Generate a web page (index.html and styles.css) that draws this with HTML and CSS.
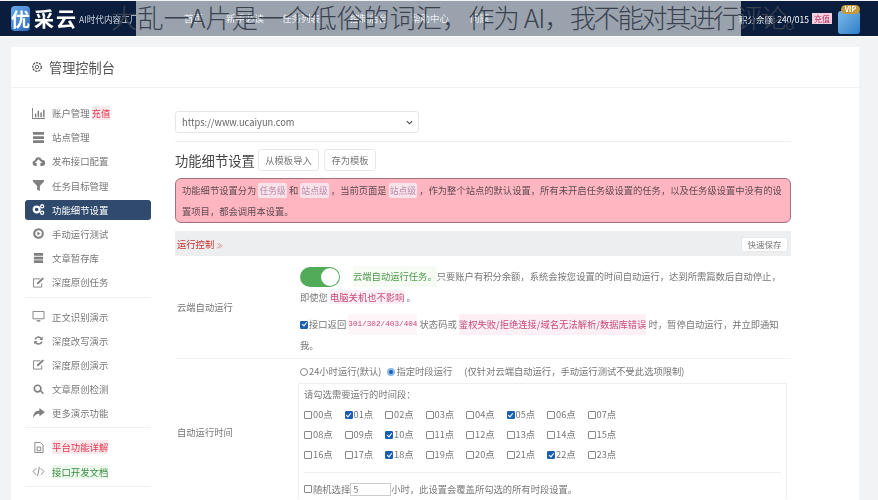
FILE: index.html
```html
<!DOCTYPE html>
<html lang="zh-CN">
<head>
    <meta charset="UTF-8">
    <title>优采云 - 功能细节设置</title>
    <link rel="stylesheet" href="styles.css">
</head>
<body>
    <svg class="defs" width="0" height="0">
        <symbol id="i-chart" viewBox="0 0 14 12"><path d="M0 0v12h14v-1H1V0zM3 6h1.600v4H3zM6 3h1.600v7H6zM9 5h1.600v5H9zM12 2h1.600v8H12z"/></symbol>
        <symbol id="i-server" viewBox="0 0 14 12"><path d="M1 0h12v3H1zM1 4.500h12v3H1zM1 9h12v3H1z"/></symbol>
        <symbol id="i-cloud" viewBox="0 0 14 12"><path d="M3.500 11A3.300 3.300 0 0 1 3 4.500 4 4 0 0 1 10.600 4 3.500 3.500 0 0 1 11 11H9V7.500h2L7 3.500l-4 4h2V11z"/></symbol>
        <symbol id="i-filter" viewBox="0 0 14 12"><path d="M1 0h12v1.600L8.500 6.500V12l-3-1.500V6.500L1 1.600z"/></symbol>
        <symbol id="i-cogs" viewBox="0 0 14 12"><circle cx="5" cy="6" r="3.200" fill="none" stroke="currentColor" stroke-width="2.400"/><circle cx="11" cy="2.500" r="1.700" fill="none" stroke="currentColor" stroke-width="1.400"/><circle cx="11" cy="9.500" r="1.700" fill="none" stroke="currentColor" stroke-width="1.400"/></symbol>
        <symbol id="i-play" viewBox="0 0 14 12"><circle cx="7" cy="6" r="4.700" fill="none" stroke="currentColor" stroke-width="2.200"/><path d="M5.800 3.800 9 6l-3.200 2.200z"/></symbol>
        <symbol id="i-db" viewBox="0 0 14 12"><path d="M2 0h10v3H2zM2 4h10v3H2zM2 8h10v3H2z"/></symbol>
        <symbol id="i-edit" viewBox="0 0 14 12"><path d="M9 2H1.500v9h9V7" fill="none" stroke="currentColor"/><path d="m5 8 .6-2L11.500.5 13 2 7 7.500z"/></symbol>
        <symbol id="i-desktop" viewBox="0 0 14 12"><path d="M1 .5h12v8H1z" fill="none" stroke="currentColor"/><path d="M5 10h4v1.500H5z"/></symbol>
        <symbol id="i-sync" viewBox="0 0 14 12"><path d="M2.500 5a4.600 4.600 0 0 1 8-2l1.200-1.200V5.500H8L9.300 4.200A2.900 2.900 0 0 0 4.300 5zM11.500 7a4.600 4.600 0 0 1-8 2l-1.200 1.200V6.500H6L4.700 7.800a2.900 2.900 0 0 0 5-.8z"/></symbol>
        <symbol id="i-search" viewBox="0 0 14 12"><circle cx="6" cy="5" r="3.600" fill="none" stroke="currentColor" stroke-width="1.800"/><path d="m8.500 7.500 1.300-1 3 3.500-1.300 1.200z"/></symbol>
        <symbol id="i-share" viewBox="0 0 14 12"><path d="M8 0l6 4.500L8 9V6.200C5 6.200 3 7.500 1 11c.2-5 2.600-8 7-8.200z"/></symbol>
        <symbol id="i-file" viewBox="0 0 14 12"><path d="M3 .5h6l3 3v8H3zM5.500 5.500h4v4h-4z" fill="none" stroke="currentColor"/></symbol>
        <symbol id="i-code" viewBox="0 0 14 12"><path d="M4.500 2.500 1 6l3.500 3.500M9.500 2.500 13 6 9.500 9.500M8 1 6 11" fill="none" stroke="currentColor"/></symbol>
    </svg>

    <div class="topbar">
        <div class="brand">
            <span class="brand-icon">优</span>
            <span class="brand-name">采云</span>
            <span class="brand-slogan">AI时代内容工厂</span>
        </div>
        <div class="topnav">
            <span class="topnav-a">首页</span>
            <span class="topnav-b">新手必读</span>
            <span class="topnav-c">任务列表</span>
            <span class="topnav-d">控制后台</span>
            <span class="topnav-e">帮助中心</span>
            <span class="topnav-f">问题</span>
        </div>
        <div class="account">
            <span class="credit">积分余额: 240/015</span>
            <span class="charge">充值</span>
            <span class="avatar"><span class="vip">VIP</span></span>
        </div>
    </div>
    <div class="caption">大乱一A片是一个低俗的词汇，<span class="cap-mid">作为 AI，</span><span class="cap-end">我不能对其进行评论。</span></div>

    <div class="page">
        <div class="panel">
            <div class="panel-head">
                <svg class="gear" viewBox="0 0 14 14"><circle cx="7" cy="7" r="5" fill="none" stroke="#555" stroke-width="1.500" stroke-dasharray="2.600 1"/><circle cx="7" cy="7" r="2" fill="none" stroke="#555"/></svg>
                <span>管理控制台</span>
            </div>
            <div class="panel-body">
                <div class="sidebar">
                    <a class="side-item"><svg><use href="#i-chart"/></svg>账户管理 <em class="red">充值</em></a>
                    <a class="side-item"><svg><use href="#i-server"/></svg>站点管理</a>
                    <a class="side-item"><svg><use href="#i-cloud"/></svg>发布接口配置</a>
                    <a class="side-item"><svg><use href="#i-filter"/></svg>任务目标管理</a>
                    <a class="side-item active"><svg><use href="#i-cogs"/></svg>功能细节设置</a>
                    <a class="side-item"><svg><use href="#i-play"/></svg>手动运行测试</a>
                    <a class="side-item"><svg><use href="#i-db"/></svg>文章暂存库</a>
                    <a class="side-item"><svg><use href="#i-edit"/></svg>深度原创任务</a>
                    <div class="side-line"></div>
                    <a class="side-item"><svg><use href="#i-desktop"/></svg>正文识别演示</a>
                    <a class="side-item"><svg><use href="#i-sync"/></svg>深度改写演示</a>
                    <a class="side-item"><svg><use href="#i-edit"/></svg>深度原创演示</a>
                    <a class="side-item"><svg><use href="#i-search"/></svg>文章原创检测</a>
                    <a class="side-item"><svg><use href="#i-share"/></svg>更多演示功能</a>
                    <div class="side-line"></div>
                    <a class="side-item"><svg><use href="#i-file"/></svg><em class="red">平台功能详解</em></a>
                    <a class="side-item"><svg><use href="#i-code"/></svg><em class="green">接口开发文档</em></a>
                    <div class="side-line"></div>
                </div>

                <div class="main">
                    <div class="site-select">https://www.ucaiyun.com<svg viewBox="0 0 8 5"><path d="M1 1l3 3 3-3" fill="none" stroke="#444" stroke-width="1.300"/></svg></div>
                    <div class="main-line"></div>
                    <div class="title-row">
                        <h2>功能细节设置</h2>
                        <button class="btn btn-import">从模板导入</button>
                        <button class="btn btn-save">存为模板</button>
                    </div>
                    <div class="alert">功能细节设置分为 <code>任务级</code> 和 <code>站点级</code> ，当前页面是 <code>站点级</code> ，作为整个站点的默认设置，所有未开启任务级设置的任务，以及任务级设置中没有的设置项目，都会调用本设置。</div>
                    <div class="section-bar">
                        <span>运行控制 <small>≫</small></span>
                        <button class="btn btn-quick">快速保存</button>
                    </div>

                    <div class="form-row row-cloud">
                        <div class="form-label">云端自动运行</div>
                        <div class="form-value">
                            <div class="text-line switch-line">
                                <span class="switch"><i></i></span>
                                <span class="hl-green">云端自动运行任务。</span>只要账户有积分余额，系统会按您设置的时间自动运行，达到所需篇数后自动停止，
                            </div>
                            <div class="text-line">即使您 <span class="hl-red">电脑关机也不影响</span> 。</div>
                            <div class="text-line check-line"><span class="check on"></span>接口返回 <code class="mono">301/302/403/404</code> 状态码或 <span class="hl-red">鉴权失败/拒绝连接/域名无法解析/数据库错误</span> 时，暂停自动运行，并立即通知</div>
                            <div class="text-line">我。</div>
                        </div>
                    </div>

                    <div class="form-row row-time">
                        <div class="form-label">自动运行时间</div>
                        <div class="form-value">
                            <div class="radio-line">
                                <span class="radio"></span>24小时运行(默认)
                                <span class="radio on"></span>指定时段运行
                                <span class="radio-note">(仅针对云端自动运行，手动运行测试不受此选项限制)</span>
                            </div>
                            <div class="time-box">
                                <div class="time-tip">请勾选需要运行的时间段：</div>
                                <div class="hours" id="hours"></div>
                                <div class="box-line"></div>
                                <div class="random"><span class="check"></span>随机选择<span class="num-input">5</span>小时，此设置会覆盖所勾选的所有时段设置。</div>
                            </div>
                        </div>
                    </div>
                </div>
            </div>
        </div>
    </div>

    <script>
        // hour checkboxes, 8 per row
        let checked = [1, 5, 10, 18, 22];
        let hours = document.getElementById("hours");
        for (let i = 0; i < 24; i++) {
            let label = document.createElement("span");
            label.className = "hour";
            let box = document.createElement("span");
            box.className = checked.includes(i) ? "check on" : "check";
            label.appendChild(box);
            label.appendChild(document.createTextNode(String(i).padStart(2, "0") + "点"));
            hours.appendChild(label);
        }
    </script>
</body>
</html>
```

FILE: styles.css
```css
body {
    margin: 0;
    height: 500px;
    overflow: hidden;
    font-family: "Noto Sans CJK SC", "Liberation Sans", sans-serif;
    font-size: 9.300px;
    color: #777;
    background: #f1f3f5;
}

.defs {
    position: absolute;
}

/* Top bar */
.topbar {
    display: flex;
    height: 35px;
    margin-top: 1px;
    color: #fff;
    background: #0a1d3c;
    box-shadow: 0 1px 0 #fff;
    filter: blur(0.4px);
}

.brand {
    display: flex;
    align-items: center;
    width: 136px;
    flex: none;
}

.brand-icon {
    width: 25px;
    height: 25px;
    margin-left: 11px;
    border-radius: 4px;
    background: linear-gradient(135deg, #6aa8ea, #2b69ba);
    font-size: 19px;
    font-weight: bold;
    line-height: 25px;
    text-align: center;
}

.brand-name {
    margin-left: 4px;
    font-size: 20px;
    font-weight: bold;
    letter-spacing: 2px;
    white-space: nowrap;
}

.brand-slogan {
    margin-left: 1px;
    font-size: 8.600px;
    white-space: nowrap;
    color: #cfd6e2;
}

.topnav {
    display: flex;
    flex: 1;
    padding-left: 48px;
    font-size: 9.500px;
    line-height: 35px;
    white-space: nowrap;
    background: #9aa3ad;
    color: #eef0f3;
}

.topnav-b { margin-left: 23px; }
.topnav-c { margin-left: 18px; }
.topnav-d { margin-left: 30px; }
.topnav-e { margin-left: 23px; }
.topnav-f { margin-left: 21px; }

.account {
    display: flex;
    align-items: center;
    width: 137px;
    flex: none;
    font-size: 8.500px;
    white-space: nowrap;
}

.credit {
    margin-left: -2px;
}

.charge {
    margin-left: 3px;
    padding: 0 2px;
    background: #f3cfe0;
    color: #c0305f;
    font-size: 8px;
    line-height: 11px;
}

.avatar {
    position: relative;
    width: 22px;
    height: 23px;
    margin-left: 6px;
    margin-top: 7px;
    border-radius: 3px;
    background: linear-gradient(135deg, #7dbbe8, #2f7ec9);
}

.vip {
    position: absolute;
    top: -6px;
    left: 3px;
    width: 19px;
    border-radius: 6px;
    background: #c4983b;
    font-size: 7px;
    font-weight: bold;
    line-height: 9px;
    text-align: center;
}

/* Big caption across the top */
.caption {
    position: absolute;
    top: -2px;
    left: 111px;
    width: 767px;
    overflow: hidden;
    font-size: 26.300px;
    font-weight: 300;
    line-height: 38px;
    white-space: nowrap;
    color: #3a4250;
}

.cap-mid {
    letter-spacing: -1px;
}

.cap-end {
    letter-spacing: -2.400px;
}

/* Panel */
.page {
    padding: 11px 19px 0 11px;
    filter: blur(0.4px);
}

.panel {
    background: #fff;
    height: 460px;
}

.panel-head {
    display: flex;
    align-items: center;
    height: 40px;
    padding-left: 20px;
    border-bottom: 1px solid #f0f0f0;
    font-size: 13.200px;
    color: #555;
}

.gear {
    width: 12px;
    height: 12px;
    margin-right: 6px;
}

.panel-body {
    display: flex;
}

/* Sidebar */
.sidebar {
    width: 126px;
    margin-left: 14px;
    padding-top: 15px;
    flex: none;
}

.side-item {
    display: flex;
    align-items: center;
    height: 20px;
    margin-bottom: 4.200px;
    padding-left: 7px;
    border-radius: 3px;
    font-size: 9.400px;
    color: #777;
    white-space: pre;
}

.side-item svg {
    width: 13px;
    height: 11px;
    margin-right: 7px;
    fill: #808080;
    color: #808080;
}

.side-item.active {
    background: #2f4a6d;
    color: #fff;
}

.side-item.active svg {
    fill: #fff;
    color: #fff;
}

.side-item em {
    font-style: normal;
}

.red {
    color: #e8334f;
    background: #fdeaec;
}

.green {
    color: #3a8a44;
    background: #ecf8ec;
}

.side-line {
    height: 1px;
    margin: 4px 0 9px;
    background: #f0f0f0;
}

/* Main column */
.main {
    width: 616px;
    margin-left: 24px;
    padding-top: 23px;
}

.site-select {
    display: flex;
    align-items: center;
    justify-content: space-between;
    box-sizing: border-box;
    width: 244px;
    height: 22px;
    padding: 0 5px 0 6px;
    border: 1px solid #e6e6e6;
    border-radius: 3px;
    color: #666;
}

.site-select svg {
    width: 7px;
    height: 5px;
}

.main-line {
    height: 1px;
    margin: 8px 0 7px;
    background: #eee;
}

.title-row {
    display: flex;
    align-items: center;
    gap: 5px;
    height: 22px;
}

.title-row h2 {
    width: 78px;
    margin: 0;
    font-size: 13.300px;
    font-weight: normal;
    color: #444;
    white-space: nowrap;
}

.btn {
    height: 22px;
    padding: 0;
    border: 1px solid #e8e8e8;
    border-radius: 3px;
    background: #fff;
    font: inherit;
    color: #777;
}

.btn-import {
    width: 61px;
}

.btn-save {
    width: 52px;
}

.alert {
    box-sizing: border-box;
    height: 45px;
    margin-top: 7px;
    padding: 1px 6px;
    border: 1px solid #a4707c;
    border-radius: 6px;
    background: #ffb6c1;
    line-height: 21px;
    color: #5f4a52;
}

.alert code {
    padding: 1px;
    border-radius: 2px;
    background: #f9e3ea;
    font: inherit;
    font-size: 8.800px;
    color: #b98aa8;
}

.section-bar {
    display: flex;
    align-items: center;
    justify-content: space-between;
    height: 25px;
    margin-top: 8px;
    padding: 0 3px 0 2px;
    background: #eceeef;
    color: #c9302c;
}

.section-bar small {
    font-size: 7px;
    color: #d9807c;
}

.btn-quick {
    width: 47px;
    height: 15px;
    margin-top: 2px;
    font-size: 8.500px;
    line-height: 13px;
}

/* Form rows */
.form-row {
    display: flex;
    align-items: center;
    border-bottom: 1px solid #f2f2f2;
}

.row-time {
    align-items: flex-start;
    border-bottom: 0;
}

.row-time .form-label {
    margin-top: 66px;
}

.form-label {
    width: 125px;
    padding-left: 2px;
    box-sizing: border-box;
    flex: none;
}

.form-value {
    width: 491px;
    white-space: nowrap;
}

.row-cloud {
    box-sizing: border-box;
    height: 103px;
}

.row-cloud .form-value {
    align-self: flex-start;
    padding-top: 10px;
}

.text-line {
    height: 21px;
    line-height: 21px;
}

.switch-line {
    display: flex;
    align-items: center;
}

.check-line {
    display: flex;
    align-items: center;
    margin-top: 6px;
    white-space: pre;
}

.switch {
    position: relative;
    width: 40px;
    height: 20px;
    margin-right: 13px;
    border-radius: 10px;
    background: #52ab58;
    flex: none;
}

.switch i {
    position: absolute;
    top: 1px;
    right: 1px;
    width: 18px;
    height: 18px;
    border-radius: 50%;
    background: #fff;
}

.hl-green {
    color: #4d9a4d;
    background: #f6fbf3;
}

.hl-red {
    color: #c9487a;
    background: #fcf0f4;
}

.mono {
    font-family: "Liberation Mono", monospace;
    font-size: 7.700px;
    color: #c9487a;
    background: #fdf5f8;
}

.check {
    display: inline-block;
    position: relative;
    box-sizing: border-box;
    width: 8px;
    height: 8px;
    margin-right: 1px;
    border: 1px solid #888;
    border-radius: 1px;
    vertical-align: -1px;
    flex: none;
}

.check.on {
    border-color: #1a5fb4;
    background: #1a5fb4;
}

.check.on::after {
    content: "";
    position: absolute;
    left: 1.500px;
    top: -0.500px;
    width: 2px;
    height: 4px;
    border: solid #fff;
    border-width: 0 1px 1px 0;
    transform: rotate(40deg);
}

.radio {
    display: inline-block;
    box-sizing: border-box;
    width: 8px;
    height: 8px;
    margin-right: 1px;
    border: 1px solid #888;
    border-radius: 50%;
    vertical-align: -1px;
}

.radio.on {
    margin-left: 4px;
    border: 2px solid #8fb8e6;
    background: #1a5fb4;
}

.radio-note {
    margin-left: 10px;
}

.radio-line {
    height: 24px;
    line-height: 24px;
}

.time-box {
    box-sizing: border-box;
    width: 489px;
    margin-left: -2px;
    padding: 0 5px;
    border: 1px solid #eee;
    border-bottom: 0;
}

.time-tip {
    line-height: 20px;
}

.hours {
    display: grid;
    grid-template-columns: repeat(8, 40.500px);
    width: 324px;
}

.hour {
    height: 20px;
    line-height: 20px;
}

.box-line {
    height: 1px;
    margin: 8px 0 6px;
    background: #eee;
}

.random {
    display: flex;
    align-items: center;
    height: 20px;
    white-space: pre;
}

.num-input {
    box-sizing: border-box;
    width: 41px;
    height: 13px;
    padding-left: 2px;
    border: 1px solid #ccc;
    line-height: 11px;
}
```
